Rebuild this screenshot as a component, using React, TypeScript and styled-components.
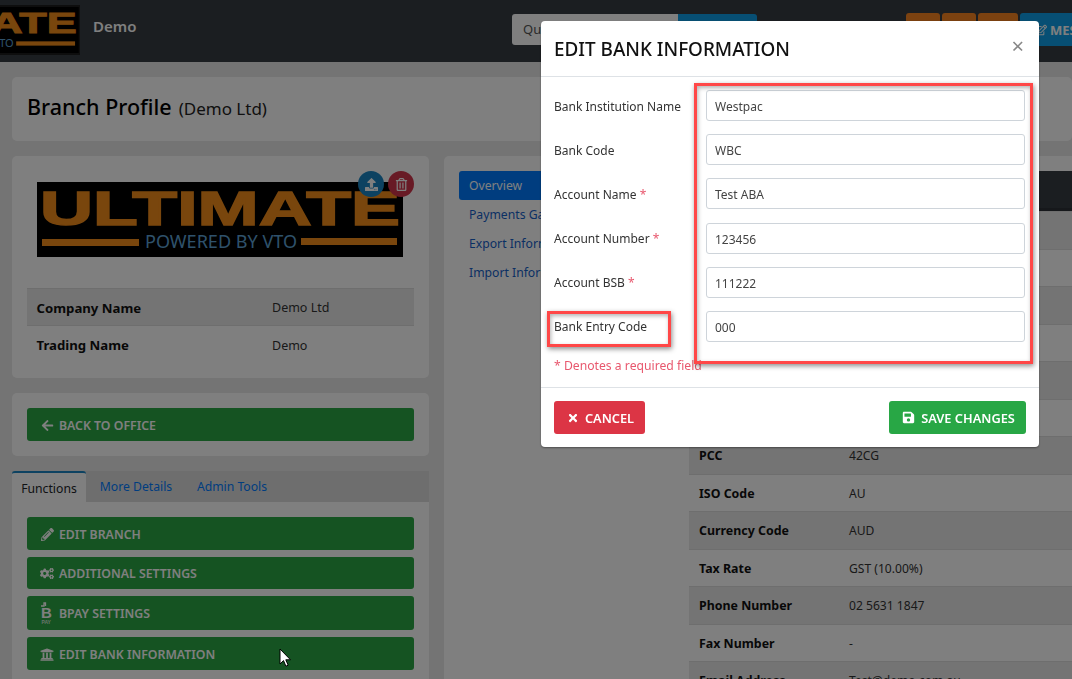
import React from "react";
import styled, { createGlobalStyle } from "styled-components";
import { FaArrowLeft, FaPencilAlt, FaCogs, FaUniversity, FaTimes, FaSave, FaUpload, FaRegTrashAlt, FaRegEdit } from "react-icons/fa";

const Global = createGlobalStyle`
  html, body { margin: 0; padding: 0; height: 100%; overflow: hidden; background: #e8e8e8; }
  * { box-sizing: border-box; }
  body { font-family: "Noto Sans", "Open Sans", Arial, sans-serif; font-size: 13px; color: #212529; }
`;

const Page = styled.div`
  width: 1072px;
  height: 679px;
  overflow: hidden;
  display: flex;
  flex-direction: column;
`;
const Navbar = styled.header`
  flex: none;
  height: 62px;
  background: #363c42;
  display: flex;
  align-items: flex-start;
  overflow: hidden;
`;
const NavLogo = styled.div`
  flex: none;
  width: 80px;
  height: 50px;
  margin-top: 5px;
  padding-top: 2px;
  overflow: hidden;
  display: flex;
  justify-content: flex-end;
  background: #1c1c1c;
`;
const Brand = styled.div`
  flex: none;
  margin: 15px 0 0 13px;
  width: 419px;
  font-size: 15px;
  line-height: 22px;
  font-weight: 600;
  color: #fff;
`;
const Search = styled.div`
  flex: none;
  display: flex;
  width: 245px;
  height: 31px;
  margin-top: 14px;
`;
const SearchInput = styled.div`
  flex: none;
  width: 166px;
  background: #fff;
  border-radius: 3px 0 0 3px;
  padding: 6px 11px;
  color: #555;
  font-size: 13px;
`;
const SearchButton = styled.div`
  flex: 1;
  background: #0f9fe8;
  border-radius: 0 3px 3px 0;
`;
const NavActions = styled.div`
  flex: none;
  display: flex;
  gap: 2px;
  margin: 13px 0 0 149px;
`;
const OrangeButton = styled.div<{ $w: number }>`
  width: ${(p) => p.$w}px;
  height: 33px;
  background: #f88420;
  border-radius: 3px;
`;
const MessageButton = styled.div`
  width: 90px;
  height: 33px;
  background: #0f9fe8;
  border-radius: 3px;
  color: #fff;
  font-weight: 700;
  font-size: 13px;
  display: flex;
  align-items: center;
  padding-left: 15px;
  gap: 3px;
  white-space: nowrap;
  overflow: hidden;
  svg { flex: none; }
`;
const Main = styled.main`
  flex: 1;
  display: flex;
  flex-direction: column;
  padding: 15px 0 0 12px;
  gap: 15px;
  min-height: 0;
`;
const Card = styled.section`
  background: #fff;
  border-radius: 5px;
`;
const TitleCard = styled(Card)`
  flex: none;
  height: 64px;
  padding: 14px 15px;
  display: flex;
  align-items: baseline;
  gap: 7px;
`;
const Title = styled.h1`
  margin: 0;
  font-size: 21.5px;
  line-height: 32px;
  font-weight: 500;
  color: #000;
`;
const TitleSub = styled.small`
  font-size: 17px;
  color: #222;
`;
const Columns = styled.div`
  flex: 1;
  display: flex;
  gap: 15px;
  min-height: 0;
`;
const LeftColumn = styled.div`
  flex: none;
  width: 417px;
  display: flex;
  flex-direction: column;
  gap: 15px;
`;
const LogoCard = styled(Card)`
  flex: none;
  height: 222px;
  padding: 26px 15px 0;
`;
const LogoHolder = styled.div`
  position: relative;
  width: 366px;
  height: 75px;
  margin: 0 0 31px 10px;
`;
const RoundButton = styled.div<{ $bg: string; $right: number }>`
  position: absolute;
  top: -11px;
  right: ${(p) => p.$right}px;
  width: 26px;
  height: 26px;
  border-radius: 50%;
  background: ${(p) => p.$bg};
  color: #fff;
  display: flex;
  align-items: center;
  justify-content: center;
  font-size: 13px;
`;
const InfoRow = styled.div<{ $striped?: boolean }>`
  display: flex;
  align-items: center;
  height: 37.4px;
  padding: 1px 0 0 9.5px;
  background: ${(p) => (p.$striped ? "#e9e9e9" : "transparent")};
  border-top: 1px solid #dcdcdc;
`;
const InfoLabel = styled.div`
  width: 235.5px;
  font-weight: 700;
  font-size: 13.2px;
  line-height: 18px;
  color: #111;
`;
const InfoValue = styled.div`
  padding-top: 1px;
  font-size: 12.5px;
  line-height: 18px;
  color: #333;
`;
const ButtonCard = styled(Card)`
  flex: none;
  padding: 15px;
`;
const ActionButton = styled.div<{ $h: number }>`
  flex: none;
  height: ${(p) => p.$h}px;
  background: #2aa745;
  border-radius: 3px;
  color: #fff;
  font-weight: 600;
  font-size: 12.3px;
  display: flex;
  align-items: center;
  padding: 1px 0 0 13px;
  gap: 5px;
  text-transform: uppercase;
`;
const IconSlot = styled.span`
  width: 14px;
  display: flex;
  justify-content: center;
  font-size: 13px;
`;
const TabPanel = styled.div`
  flex: 1;
  display: flex;
  flex-direction: column;
`;
const Tabs = styled.div`
  flex: none;
  height: 31px;
  display: flex;
  background: #dcdcdc;
`;
const Tab = styled.div<{ $active?: boolean; $w: number }>`
  width: ${(p) => p.$w}px;
  text-align: center;
  font-size: 12.2px;
  line-height: ${(p) => (p.$active ? "32px" : "28px")};
  color: ${(p) => (p.$active ? "#212529" : "#007bff")};
  background: ${(p) => (p.$active ? "#fff" : "transparent")};
  border-top: 2px solid ${(p) => (p.$active ? "#1a85c2" : "transparent")};
  border-radius: 3px 3px 0 0;
`;
const TabBody = styled(Card)`
  border-radius: 0;
  flex: 1;
  padding: 15px;
  display: flex;
  flex-direction: column;
  gap: 7px;
`;
const RightCard = styled(Card)`
  flex: none;
  width: 800px;
  padding: 15px;
  display: flex;
  gap: 15px;
  border-radius: 5px 0 0 0;
`;
const Pills = styled.nav`
  flex: none;
  width: 215px;
  display: flex;
  flex-direction: column;
`;
const Pill = styled.div<{ $active?: boolean }>`
  height: 29px;
  padding-left: 10px;
  line-height: 29px;
  font-size: 12.2px;
  white-space: nowrap;
  color: ${(p) => (p.$active ? "#fff" : "#1560c8")};
  background: ${(p) => (p.$active ? "#007bff" : "transparent")};
  border-radius: 3px;
`;
const TableArea = styled.div`
  flex: 1;
  min-width: 0;
`;
const TableHead = styled.div`
  height: 40px;
  background: #363c42;
  border-bottom: 3px solid #2c3036;
`;
const TableRow = styled.div<{ $striped: boolean }>`
  display: flex;
  align-items: center;
  height: 37.5px;
  padding: 1px 0 0 10px;
  background: ${(p) => (p.$striped ? "#e9e9e9" : "#fff")};
  border-top: 1px solid #dcdcdc;
`;
const RowLabel = styled.div`
  width: 150px;
  font-weight: 700;
  font-size: 12.4px;
  color: #111;
`;
const RowValue = styled.div`
  font-size: 12.1px;
  color: #333;
`;
const Backdrop = styled.div`
  position: fixed;
  inset: 0;
  background: rgba(0, 0, 0, 0.5);
`;
const Modal = styled.div`
  position: fixed;
  left: 541px;
  top: 21px;
  width: 498px;
  height: 426px;
  background: #fff;
  border-radius: 4px;
  box-shadow: 0 1px 2px rgba(0, 0, 0, 0.4);
  display: flex;
  flex-direction: column;
`;
const ModalHeader = styled.div`
  flex: none;
  height: 56px;
  border-bottom: 1px solid #dee2e6;
  padding: 0 15px 0 13px;
  display: flex;
  align-items: center;
  justify-content: space-between;
`;
const ModalTitle = styled.h2`
  margin: 0;
  font-size: 18.9px;
  font-weight: 500;
  color: #111;
`;
const Close = styled.span`
  font-size: 22px;
  line-height: 20px;
  color: #888;
  margin-top: -7px;
  font-weight: 400;
`;
const Form = styled.div`
  flex: none;
  height: 311px;
  padding: 13.3px 13px 0;
  border-bottom: 1px solid #dee2e6;
  display: flex;
  flex-direction: column;
  gap: 13.1px;
`;
const FormRow = styled.div`
  display: flex;
  align-items: center;
  height: 31px;
`;
const FormLabel = styled.label`
  flex: none;
  width: 152px;
  padding-top: 1px;
  font-size: 12px;
  color: #333;
`;
const Req = styled.span`
  color: #e8586e;
`;
const Input = styled.div`
  flex: none;
  width: 319px;
  height: 31px;
  border: 1px solid #ced4da;
  border-radius: 3px;
  padding: 1px 8px 0;
  font-size: 12px;
  line-height: 29px;
  color: #444;
`;
const Note = styled.div`
  margin-top: 2.5px;
  font-size: 12.2px;
  color: #e8586e;
`;
const ModalFooter = styled.div`
  flex: 1;
  padding: 13px 13px 0;
  display: flex;
  justify-content: space-between;
  align-items: flex-start;
`;
const FooterButton = styled.div<{ $bg: string; $w: number }>`
  width: ${(p) => p.$w}px;
  height: 33px;
  padding-left: 2px;
  background: ${(p) => p.$bg};
  border-radius: 3px;
  color: #fff;
  font-weight: 600;
  font-size: 12.8px;
  display: flex;
  align-items: center;
  justify-content: center;
  gap: 6px;
`;
const Highlight = styled.div<{ $l: number; $t: number; $w: number; $h: number }>`
  position: absolute;
  left: ${(p) => p.$l}px;
  top: ${(p) => p.$t}px;
  width: ${(p) => p.$w}px;
  height: ${(p) => p.$h}px;
  border: 3px solid #ff4747;
  box-shadow: 1px 2px 5px rgba(0, 0, 0, 0.45), inset 1px 2px 4px rgba(0, 0, 0, 0.3);
  pointer-events: none;
`;
const Cursor = styled.svg`
  position: fixed;
  left: 279px;
  top: 648px;
`;

const Logo = ({ width, height }: { width: number; height: number }) => (
  <svg width={width} height={height} viewBox="0 0 366 75" style={{ flex: "none", display: "block" }}>
    <rect width="366" height="75" fill="#000" />
    <text x="3" y="43" fontFamily="Liberation Sans, sans-serif" fontWeight="700" fontSize="48" fill="#f28c1a" stroke="#f28c1a" strokeWidth="1.5" textLength="360" lengthAdjust="spacingAndGlyphs">ULTIMATE</text>
    <rect x="5" y="57" width="97" height="7" fill="#f28c1a" />
    <rect x="264" y="56" width="96" height="7" fill="#f28c1a" />
    <text x="108" y="66" fontFamily="Noto Sans, sans-serif" fontSize="18.5" fill="#5ea3d6" textLength="152" lengthAdjust="spacingAndGlyphs">POWERED BY VTO</text>
  </svg>
);

const BpayIcon = () => (
  <svg width="14" height="24" viewBox="0 0 14 24">
    <path d="M1 4h3V1h1.500V4" fill="none" stroke="#fff" strokeWidth="1.300" />
    <text x="1" y="16" fontFamily="Liberation Sans, sans-serif" fontWeight="700" fontSize="15" fill="#fff">B</text>
    <text x="1.500" y="22" fontFamily="Liberation Sans, sans-serif" fontSize="5" fill="#cfe8d5">Pay</text>
  </svg>
);

const rows: [string, string][] = [
  ["", ""], ["", ""], ["", ""], ["", ""], ["", ""], ["", ""],
  ["PCC", "42CG"],
  ["ISO Code", "AU"],
  ["Currency Code", "AUD"],
  ["Tax Rate", "GST (10.00%)"],
  ["Phone Number", "02 5631 1847"],
  ["Fax Number", "-"],
  ["Email Address", "Test@demo.com.au"],
];

const fields: { label: string; value: string; req?: boolean }[] = [
  { label: "Bank Institution Name", value: "Westpac" },
  { label: "Bank Code", value: "WBC" },
  { label: "Account Name", value: "Test ABA", req: true },
  { label: "Account Number", value: "123456", req: true },
  { label: "Account BSB", value: "111222", req: true },
  { label: "Bank Entry Code", value: "000" },
];

export default function App() {
  return (
    <Page>
      <Global />
      <Navbar>
        <NavLogo>
          <Logo width={227} height={46} />
        </NavLogo>
        <Brand>Demo</Brand>
        <Search>
          <SearchInput>Quick Search</SearchInput>
          <SearchButton />
        </Search>
        <NavActions>
          <OrangeButton $w={34} />
          <OrangeButton $w={34} />
          <OrangeButton $w={40} />
          <MessageButton><FaRegEdit size={12} />MESSAGES</MessageButton>
        </NavActions>
      </Navbar>
      <Main>
        <TitleCard>
          <Title>Branch Profile</Title>
          <TitleSub>(Demo Ltd)</TitleSub>
        </TitleCard>
        <Columns>
          <LeftColumn>
            <LogoCard>
              <LogoHolder>
                <Logo width={366} height={75} />
                <RoundButton $bg="#1a85c2" $right={19}><FaUpload /></RoundButton>
                <RoundButton $bg="#d1344a" $right={-11}><FaRegTrashAlt /></RoundButton>
              </LogoHolder>
              <InfoRow $striped>
                <InfoLabel>Company Name</InfoLabel>
                <InfoValue>Demo Ltd</InfoValue>
              </InfoRow>
              <InfoRow>
                <InfoLabel>Trading Name</InfoLabel>
                <InfoValue>Demo</InfoValue>
              </InfoRow>
            </LogoCard>
            <ButtonCard>
              <ActionButton $h={33}><IconSlot><FaArrowLeft /></IconSlot>Back to Office</ActionButton>
            </ButtonCard>
            <TabPanel>
              <Tabs>
                <Tab $active $w={74}>Functions</Tab>
                <Tab $w={100}>More Details</Tab>
                <Tab $w={92}>Admin Tools</Tab>
              </Tabs>
              <TabBody>
                <ActionButton $h={33}><IconSlot><FaPencilAlt /></IconSlot>Edit Branch</ActionButton>
                <ActionButton $h={32}><IconSlot><FaCogs size={15} /></IconSlot>Additional Settings</ActionButton>
                <ActionButton $h={34}><IconSlot><BpayIcon /></IconSlot>BPAY Settings</ActionButton>
                <ActionButton $h={33}><IconSlot><FaUniversity size={15} /></IconSlot>Edit Bank Information</ActionButton>
              </TabBody>
            </TabPanel>
          </LeftColumn>
          <RightCard>
            <Pills>
              <Pill $active>Overview</Pill>
              <Pill>Payments Gateway</Pill>
              <Pill>Export Information</Pill>
              <Pill>Import Information</Pill>
            </Pills>
            <TableArea>
              <TableHead />
              {rows.map(([label, value], i) => (
                <TableRow key={i} $striped={i % 2 === 0}>
                  <RowLabel>{label}</RowLabel>
                  <RowValue>{value}</RowValue>
                </TableRow>
              ))}
            </TableArea>
          </RightCard>
        </Columns>
      </Main>
      <Backdrop />
      <Modal>
        <ModalHeader>
          <ModalTitle>EDIT BANK INFORMATION</ModalTitle>
          <Close>×</Close>
        </ModalHeader>
        <Form>
          {fields.map((f) => (
            <FormRow key={f.label}>
              <FormLabel>{f.label}{f.req && <Req> *</Req>}</FormLabel>
              <Input>{f.value}</Input>
            </FormRow>
          ))}
          <Note>* Denotes a required field</Note>
        </Form>
        <ModalFooter>
          <FooterButton $bg="#dc3545" $w={91}><FaTimes size={12} />CANCEL</FooterButton>
          <FooterButton $bg="#28a745" $w={137}><FaSave size={13} />SAVE CHANGES</FooterButton>
        </ModalFooter>
        <Highlight $l={153} $t={62} $w={339} $h={281} />
        <Highlight $l={6} $t={290} $w={124} $h={36} />
      </Modal>
      <Cursor width="13" height="20" viewBox="0 0 13 20">
        <path d="M1 1v15l3.500-3.400 2.400 5.600 2.300-1-2.400-5.400H11.500z" fill="#fff" stroke="#000" strokeWidth="1" />
      </Cursor>
    </Page>
  );
}
